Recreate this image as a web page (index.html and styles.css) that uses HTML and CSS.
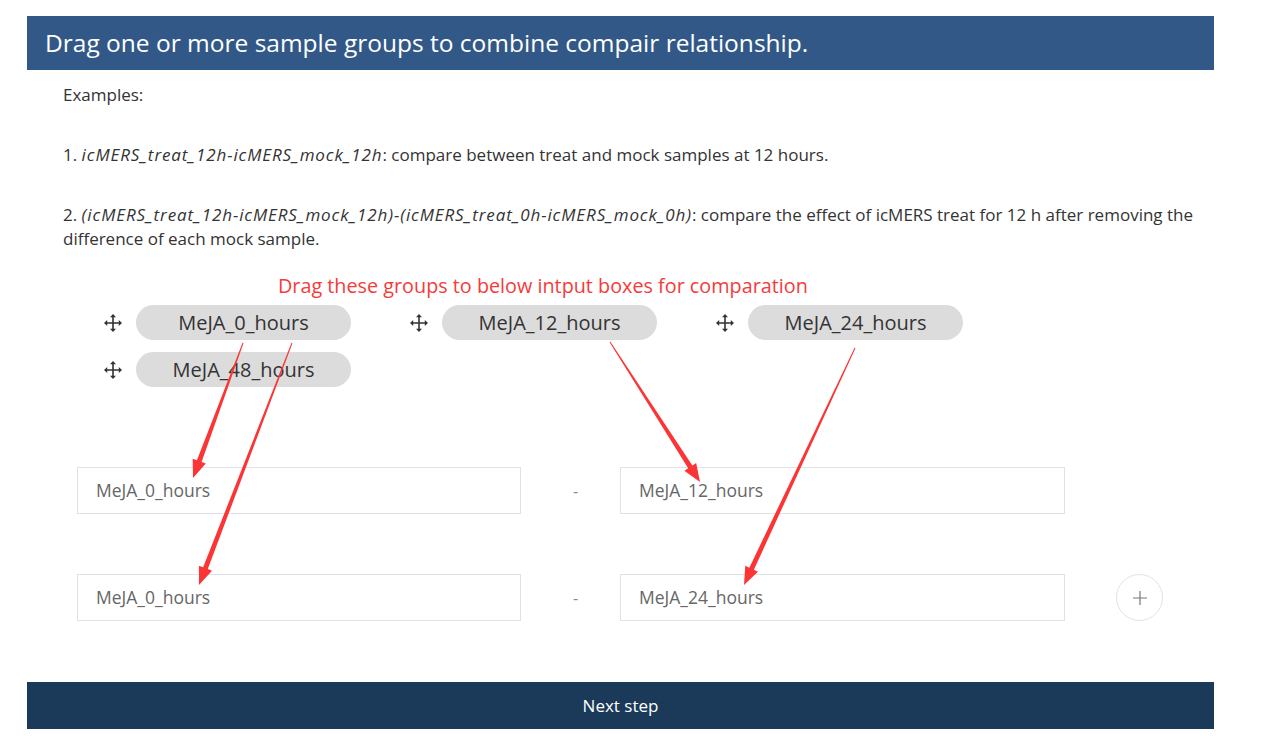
FILE: index.html
```html
<!DOCTYPE html>
<html lang="en">
<head>
  <meta charset="UTF-8">
  <title>Compare Groups</title>
  <link rel="stylesheet" href="styles.css">
</head>
<body>

  <div class="panel">
    <h2 class="panel-title">Drag one or more sample groups to combine compair relationship.</h2>

    <!-- Examples -->
    <div class="examples">
      <p>Examples:</p>
      <p>1. <i>icMERS_treat_12h-icMERS_mock_12h</i>: compare between treat and mock samples at 12 hours.</p>
      <p>2. <i>(icMERS_treat_12h-icMERS_mock_12h)-(icMERS_treat_0h-icMERS_mock_0h)</i>: compare the effect of icMERS treat for 12 h after removing the<br>difference of each mock sample.</p>
    </div>

    <!-- Groups -->
    <div class="hint">Drag these groups to below intput boxes for comparation</div>
    <div class="groups">
      <div class="group"><svg class="move" viewBox="0 0 18 18"><path d="M9 2v14M2 9h14" stroke="#333" stroke-width="1.6"/><path d="M9 0l3 3.2H6zM9 18l3-3.2H6zM0 9l3.2-3v6zM18 9l-3.2-3v6z" fill="#333"/></svg><span class="pill">MeJA_0_hours</span></div>
      <div class="group"><svg class="move" viewBox="0 0 18 18"><path d="M9 2v14M2 9h14" stroke="#333" stroke-width="1.6"/><path d="M9 0l3 3.2H6zM9 18l3-3.2H6zM0 9l3.2-3v6zM18 9l-3.2-3v6z" fill="#333"/></svg><span class="pill">MeJA_12_hours</span></div>
      <div class="group"><svg class="move" viewBox="0 0 18 18"><path d="M9 2v14M2 9h14" stroke="#333" stroke-width="1.6"/><path d="M9 0l3 3.2H6zM9 18l3-3.2H6zM0 9l3.2-3v6zM18 9l-3.2-3v6z" fill="#333"/></svg><span class="pill">MeJA_24_hours</span></div>
      <div class="group"><svg class="move" viewBox="0 0 18 18"><path d="M9 2v14M2 9h14" stroke="#333" stroke-width="1.6"/><path d="M9 0l3 3.2H6zM9 18l3-3.2H6zM0 9l3.2-3v6zM18 9l-3.2-3v6z" fill="#333"/></svg><span class="pill">MeJA_48_hours</span></div>
    </div>

    <!-- Compare rows -->
    <div class="compare">
      <div class="row">
        <div class="box">MeJA_0_hours</div>
        <span class="minus">-</span>
        <div class="box">MeJA_12_hours</div>
        <span></span>
      </div>
      <div class="row">
        <div class="box">MeJA_0_hours</div>
        <span class="minus">-</span>
        <div class="box">MeJA_24_hours</div>
        <button class="add"><svg viewBox="0 0 16 16" width="16" height="16"><path d="M8 1v14M1 8h14" stroke="#777" stroke-width="1.2"/></svg></button>
      </div>
    </div>

    <button class="next">Next step</button>
  </div>

  <!-- annotation arrows -->
  <svg class="arrows" width="1280" height="751" viewBox="0 0 1280 751">
    <g fill="#fb3535">
      <polygon points="243.47,343.17 201.59,461.99 205.81,463.55 193,478 192.69,458.69 196.91,460.25 242.53,342.83"/>
      <polygon points="292.47,343.18 207.79,569.10 211.99,570.71 199,585 198.93,565.69 203.13,567.30 291.53,342.82"/>
      <polygon points="610.42,341.73 692.37,465.51 696.16,463.07 700,482 684.38,470.65 688.17,468.21 609.58,342.27"/>
      <polygon points="855.45,348.21 753.89,569.76 757.97,571.67 744,585 745.29,565.73 749.37,567.64 854.55,347.79"/>
    </g>
  </svg>

</body>
</html>
```

FILE: styles.css
```css
body {
  margin: 0;
  font-family: 'Open Sans', 'Noto Sans', sans-serif;
  background: #fff;
  color: #333;
}
.panel {
  width: 1187px;
  margin: 16px 0 0 27px;
}
.panel-title {
  margin: 0;
  height: 54px;
  line-height: 54px;
  padding-left: 18px;
  background: #325888;
  color: #fff;
  font-size: 24.5px;
  font-weight: normal;
}
.examples {
  padding: 13px 0 0 36px;
  font-size: 17px;
}
.examples p {
  margin: 0 0 36px;
  line-height: 24px;
  white-space: nowrap;
}
.examples p:last-child {
  margin-bottom: 0;
}
.examples i {
  letter-spacing: 0.9px;
}
.hint {
  margin-top: 22px;
  padding-left: 251px;
  color: #f53b3b;
  font-size: 19.8px;
  line-height: 26px;
}
.groups {
  display: grid;
  grid-template-columns: repeat(3, 306px);
  row-gap: 12px;
  margin: 6px 0 0 77px;
}
.group {
  display: flex;
  align-items: center;
  gap: 14px;
}
.move {
  width: 18px;
  height: 18px;
}
.pill {
  width: 215px;
  height: 35px;
  line-height: 35px;
  border-radius: 18px;
  background: #dcdcdc;
  text-align: center;
  font-size: 20px;
  color: #333;
}
.compare {
  margin: 80px 0 0 50px;
  display: flex;
  flex-direction: column;
  gap: 60px;
}
.row {
  display: grid;
  grid-template-columns: 444px 99px 445px 51px 47px;
  align-items: center;
}
.box {
  box-sizing: border-box;
  height: 47px;
  line-height: 45px;
  border: 1px solid #e1e1ea;
  padding-left: 18px;
  font-size: 17.5px;
  color: #666;
}
.minus {
  text-align: center;
  color: #888;
  padding-left: 10px;
}
.add {
  grid-column: 5;
  display: flex;
  align-items: center;
  justify-content: center;
  width: 47px;
  height: 47px;
  border: 1px solid #e2e2e6;
  border-radius: 50%;
  background: #fff;
  padding: 0;
  cursor: pointer;
}
.next {
  display: block;
  width: 100%;
  height: 47px;
  margin-top: 61px;
  border: none;
  background: #1b3a59;
  color: #fff;
  font-family: inherit;
  font-size: 17px;
  cursor: pointer;
}
.arrows {
  position: absolute;
  left: 0;
  top: 0;
  pointer-events: none;
}
```
